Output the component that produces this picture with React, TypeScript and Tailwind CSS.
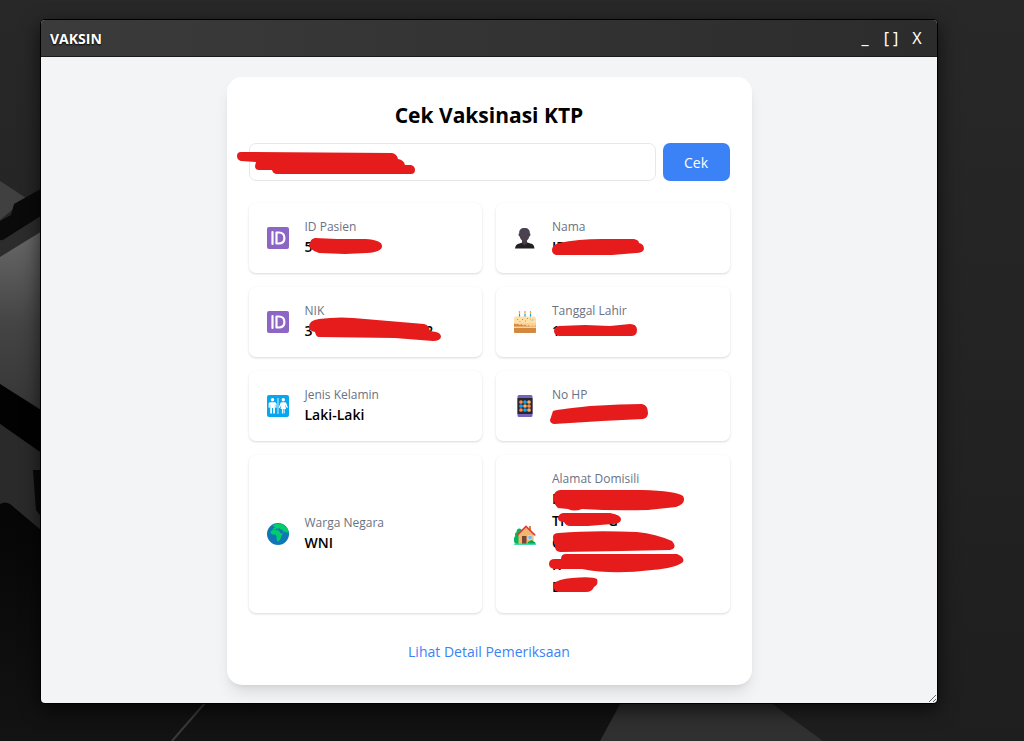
import type { ReactNode } from "react"

interface Field {
  label: string
  lines: string[]
  icon: ReactNode
  marks?: string[]
}

function IdIcon() {
  return (
    <svg viewBox="0 0 22 22" className="size-[22px] shrink-0" aria-hidden="true">
      <rect width="22" height="22" rx="2" fill="#8d65c5" />
      <path d="M5.5 5v12M9.5 5.500h2.300c3.400 0 5.600 2 5.600 5.500s-2.200 5.500-5.600 5.500H9.500z" fill="none" stroke="#fff" strokeWidth="2.200" strokeLinecap="round" strokeLinejoin="round" />
    </svg>
  )
}

function PersonIcon() {
  return (
    <svg viewBox="0 0 22 22" className="size-[22px] shrink-0" aria-hidden="true">
      <path d="M1 21.500c.4-3 1.800-4.300 4.500-4.900l3-1.200h5l3 1.200c2.700.6 3.600 1.900 4 4.900z" fill="#212121" />
      <path d="M8 13h5v3.200l-2.500 2.300L8 16.200z" fill="#433b49" />
      <path d="M10.500 1C6.800 1 5 3 5.200 6.200c-1 .2-.9 3 .5 3.200.6 2.900 2.600 5 4.800 5s4.200-2.100 4.800-5c1.400-.2 1.500-3 .5-3.200C16 3 14.200 1 10.500 1z" fill="#4a424f" />
    </svg>
  )
}

function CakeIcon() {
  return (
    <svg viewBox="0 0 22 22" className="size-[22px] shrink-0" aria-hidden="true">
      <path d="M5.500 2.500v4M11 2.500v4M16.500 2.500v4" stroke="#00a6ed" strokeWidth="1.200" />
      <path d="M5.500 0v2M11 0v2M16.500 0v2" stroke="#f3a53c" strokeWidth="1.300" />
      <path d="M0 7.500Q0 5.500 2 5.500h18q2 0 2 2V13H0z" fill="#ffdfa6" />
      <path d="M0 12.500h22V21q0 1-1 1H1q-1 0-1-1z" fill="#d3883e" />
      <path d="M0 12q1.800 2.500 3.700.5 1.800 2.500 3.700.5 1.800 2.500 3.600.5 1.900 2.500 3.700.5 1.800 2.500 3.700.5 1.800 2 3.600-.5v-2H0z" fill="#fad394" />
      <path d="M0 16.200h22" stroke="#ffe2ae" strokeWidth="1.300" />
      <path d="M3 8l1 1M13 7l1 1" stroke="#f070a8" />
      <path d="M8 9l1-1M18 9.500l1-1" stroke="#26b2ef" />
      <path d="M11 10h1M16 8h1M5.500 10.500h1" stroke="#e39b4c" />
    </svg>
  )
}

function RestroomIcon() {
  return (
    <svg viewBox="0 0 22 22" className="size-[22px] shrink-0" aria-hidden="true">
      <rect width="22" height="22" rx="2" fill="#08a6ee" />
      <path d="M11 3v16" stroke="#d8f2fd" />
      <g fill="#fff">
        <circle cx="5.500" cy="4.800" r="1.700" />
        <path d="M3 7.200h5c1 0 1.500 1 1.500 2v3.600H8.300V9.500h-.4V18.500H6.100V13H5v5.500H3.200V9.500h-.4v3.300H1.600V9.200c0-1 .4-2 1.400-2z" />
        <circle cx="16.300" cy="4.800" r="1.700" />
        <path d="M14.500 7.200h3.600l1 .6 1.800 4.700-1.100.4-1.600-3.300.8 4.500h-1.400v4.400h-1v-4.400h-.7v4.400h-1v-4.400h-1.300l.8-4.500-1.500 3.300-1.100-.4 1.800-4.700z" />
      </g>
    </svg>
  )
}

function PhoneIcon() {
  const colors = ["#fe8b4b", "#12a8ee", "#f8b268", "#12a8ee", "#f8b268", "#fe8b4b", "#fe8b4b", "#12a8ee", "#f8b268"]
  return (
    <svg viewBox="0 0 22 22" className="size-[22px] shrink-0" aria-hidden="true">
      <rect x="3.500" width="15" height="22" rx="1.500" fill="#7565ba" />
      <rect x="3.500" y="3" width="15" height="16" fill="#2b2530" />
      {colors.map((c, i) => (
        <circle key={i} cx={7 + (i % 3) * 4} cy={7 + Math.floor(i / 3) * 4} r="1.850" fill={c} />
      ))}
    </svg>
  )
}

function GlobeIcon() {
  return (
    <svg viewBox="0 0 22 22" className="size-[22px] shrink-0" aria-hidden="true">
      <circle cx="11" cy="11" r="11" fill="#0f76b8" />
      <path d="M5.500 2.500C8 .3 14 0 17 2.200c2.500 1.500 4.500 4.500 4.900 7.600l-1 .2-.8-1.500-.8 1.800-1.500-2.300-1 1.500-1.600-3-2-.2-1-1.300-1.500 1-1-.8-1.500 1.300H6.500L6 5.500l1.700-.7-.4-1z" fill="#00cf69" />
      <path d="M4 8l2-1.500 2.500-.2.500 1 3 .2 1.500 2.700 2.500.3-2 3-.5 2.500-1.700 2.300-1.300.2-1-2.500.2-2.500-1.200-2.100H5.200L3.500 10z" fill="#00cf69" />
    </svg>
  )
}

function HouseIcon() {
  return (
    <svg viewBox="0 -2 22 22" className="size-[22px] shrink-0" aria-hidden="true">
      <path d="M5.200 3.500c2 0 3 1.300 2.700 3C9.500 8 9 10 8.500 11v8h-6C-.8 18-.8 13 1.200 11c-.6-2 .2-3.500 1.400-4C2.500 5 3.500 3.500 5.200 3.500z" fill="#00b85b" />
      <rect x="15" y="1" width="2" height="5" fill="#d3883e" />
      <path d="M4.500 9.500L12 2l7.500 7.500V19h-15z" fill="#f1b56f" />
      <path d="M3.500 9.800L12 1.500l8.700 8.300" fill="none" stroke="#e33b3f" strokeWidth="1.700" strokeLinecap="round" />
      <path d="M8 11h4.500v8H8z" fill="#764534" />
      <path d="M14 10.500h4v4h-4z" fill="#72b8e8" stroke="#e3dbe8" strokeWidth=".7" />
      <path d="M13.500 19c0-2 1.200-2.800 2.200-2.600.8-1.800 3.200-1.600 3.500.1 1.600-.2 2.400 1 2.300 2.500z" fill="#00a64e" />
      <rect y="18.500" width="22" height="1.500" rx=".7" fill="#44d9a1" />
    </svg>
  )
}

const fields: Field[] = [
  {
    label: "ID Pasien",
    lines: ["5"],
    icon: <IdIcon />,
    marks: ["M5 8Q5 3 10 2L32 3 60 3Q77 4 77 10 77 16 62 17L40 18 14 17Q4 14 4 8Z"],
  },
  {
    label: "Nama",
    lines: ["IR"],
    icon: <PersonIcon />,
    marks: ["M4 19Q0 18 0 14 0 9 7 7 26 3 50 3L82 3Q87 4 87 7 92 8 92 13 91 17 84 17L60 19Z"],
  },
  {
    label: "NIK",
    lines: ["3                               2"],
    icon: <IdIcon />,
    marks: ["M4 7Q4 0 14-1 36-4 60-1L119 4Q124 5 125 11L131 12Q136 13 136 17 135 21 128 21L90 18 14 17Q11 17 10 12 4 11 4 7Z"],
  },
  {
    label: "Tanggal Lahir",
    lines: ["1"],
    icon: <CakeIcon />,
    marks: ["M2 11Q2 7 7 6L33 5 58 6 78 4Q85 4 85 10 85 16 79 16L7 16Q2 15 2 11Z"],
  },
  { label: "Jenis Kelamin", lines: ["Laki-Laki"], icon: <RestroomIcon /> },
  {
    label: "No HP",
    lines: [""],
    icon: <PhoneIcon />,
    marks: ["M-2 16L1 7Q2 6 38 2 70 0 90 0 96 1 96 9 96 14 91 15L50 17 2 20Q-2 19-2 16Z"],
  },
  { label: "Warga Negara", lines: ["WNI"], icon: <GlobeIcon /> },
  {
    label: "Alamat Domisili",
    lines: ["D", "TI            G", "C", "K", "E"],
    icon: <HouseIcon />,
    marks: [
      "M2 8Q2 3 8 2L90 2Q124 3 131 8 135 15 124 19L96 22Q60 23 30 21 22 24 16 21L6 20Q1 16 2 8Z",
      "M6 30Q7 25 12 25L58 25Q70 27 69 32 68 36 60 36L36 38 18 38Q14 38 12 34 6 34 6 30Z",
      "M1 49Q1 45 7 45 40 42 85 44 104 46 120 53 126 60 118 62L70 63 8 64Q2 63 3 56 1 54 1 49Z",
      "M-3 76Q-3 71 3 71L9 71Q9 66 14 66L125 66Q133 69 131 74 124 80 100 82 60 87 30 81L2 81Q-3 80-3 76Z",
      "M1 96Q6 91 20 90 40 88 45 91 47 96 42 99 40 104 34 104L6 104Q1 102 1 96Z",
    ],
  },
]

// red marker strokes drawn over private values
function Scribble({ paths }: { paths: string[] }) {
  return (
    <svg className="absolute left-0 top-0 size-px overflow-visible pointer-events-none" aria-hidden="true">
      {paths.map((d) => (
        <path key={d} d={d} fill="#e61c1c" />
      ))}
    </svg>
  )
}

function Wallpaper() {
  return (
    <svg viewBox="0 0 1024 741" preserveAspectRatio="none" className="absolute inset-0 size-full" aria-hidden="true">
      <defs>
        <linearGradient id="base" x1="0" y1="0" x2="0" y2="1">
          <stop offset="0" stopColor="#282828" />
          <stop offset="1" stopColor="#1e1e1e" />
        </linearGradient>
        <linearGradient id="panel" x1="0" y1="0" x2="0" y2="1">
          <stop offset="0" stopColor="#6c6c6c" />
          <stop offset=".5" stopColor="#444" />
          <stop offset="1" stopColor="#333" />
        </linearGradient>
        <linearGradient id="floor" x1="0" y1="0" x2="0" y2="1">
          <stop offset="0" stopColor="#050505" />
          <stop offset="1" stopColor="#131313" />
        </linearGradient>
      </defs>
      <rect width="1024" height="741" fill="url(#base)" />
      <path d="M0 181L26 198 12 210 0 220Z" fill="#404040" />
      <path d="M0 221L11 215 14 204 60 178V220L0 245Z" fill="#0a0a0a" />
      <path d="M0 242L60 204V240H0Z" fill="#2c2c2c" />
      <path d="M0 242L60 204V225L0 260Z" fill="#2c2c2c" />
      <path d="M0 257L60 220V430L0 384Z" fill="url(#panel)" />
      <path d="M0 384L60 422V466L0 424Z" fill="#020202" />
      <path d="M0 424L60 466V560H0Z" fill="#2a2a2a" />
      <path d="M33 470H60V540L36 510Z" fill="#080808" />
      <path d="M0 504Q5 501 10 504L60 546V703H620L600 741H0Z" fill="url(#floor)" />
      <path d="M205 703L172 741" stroke="#3a3a3a" strokeWidth="2" />
      <path d="M621 703H771L823 741H600Z" fill="#303030" />
    </svg>
  )
}

export default function App() {
  return (
    <main className="relative min-h-screen overflow-hidden bg-[#202020] pt-5 pr-[87px] pl-[41px] font-['Open_Sans','Noto_Sans',sans-serif] text-black">
      <Wallpaper />

      <section className="relative resize overflow-hidden rounded-[4px] bg-gray-100 shadow-[0_0_0_1px_#000,0_6px_20px_rgba(0,0,0,0.7)]">
        <header className="flex h-[37px] items-center justify-between border-b border-[#1a1a1a] bg-linear-to-r from-[#3b3b3b] to-[#2c2c2c] px-[9px] text-white">
          <h1 className="text-[14px] font-bold [text-shadow:0_1px_2px_#000]">VAKSIN</h1>
          <div className="flex items-center gap-1 font-['Noto_Sans',sans-serif] text-[16px]">
            <button type="button" aria-label="Minimize" className="w-[22px]">_</button>
            <button type="button" aria-label="Maximize" className="w-[22px]">[ ]</button>
            <button type="button" aria-label="Close" className="w-[22px]">X</button>
          </div>
        </header>

        <div className="px-5 pt-5 pb-[18px]">
          <div className="mx-auto max-w-[525px] rounded-[15px] bg-white p-[22px] shadow-lg">
            <h2 className="mb-3 text-center text-[21px] leading-8 font-bold">Cek Vaksinasi KTP</h2>

            <form className="mb-[22px] flex gap-[7px]" onSubmit={(e) => e.preventDefault()}>
              <div className="relative flex-1">
                <input aria-label="NIK" className="block h-[38px] w-full rounded-[7px] border border-gray-200 px-4 text-[14px] outline-none" />
                <Scribble paths={["M-8 9L143 10Q148 11 149 16 155 17 156 22H162Q166 23 166 27 166 31 162 31H28Q24 31 23 27H10Q6 27 6 23L7 19-8 18Q-12 17-12 13-12 9-8 9Z"]} />
              </div>
              <button type="submit" className="h-[38px] w-[67px] rounded-[7px] bg-[#3b82f6] text-[14px] text-white">Cek</button>
            </form>

            <dl className="grid grid-cols-2 gap-[14px]">
              {fields.map((f) => (
                <div key={f.label} className="flex items-center gap-4 rounded-[7px] px-[18px] py-[15px] shadow-[0_1px_3px_rgba(0,0,0,0.1),0_1px_2px_rgba(0,0,0,0.06)]">
                  {f.icon}
                  <div>
                    <dt className="text-[12px] leading-[18px] text-gray-500">{f.label}</dt>
                    <dd className="relative text-[14px] leading-[22px] font-semibold">
                      {f.lines.map((line, i) => (
                        <span key={i} className="block h-[22px] whitespace-pre">{line}</span>
                      ))}
                      {f.marks && <Scribble paths={f.marks} />}
                    </dd>
                  </div>
                </div>
              ))}
            </dl>

            <a href="#detail" className="mx-auto mt-7 block w-fit text-[14px] leading-[22px] text-[#3b82f6]">Lihat Detail Pemeriksaan</a>
          </div>
        </div>
      </section>
    </main>
  )
}
